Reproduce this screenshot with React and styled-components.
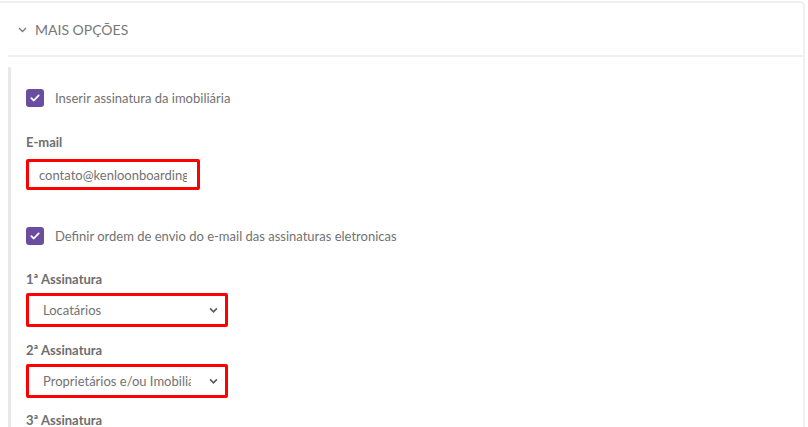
import React from 'react'
import styled, { createGlobalStyle } from 'styled-components'

const Global = createGlobalStyle`
  html, body { margin: 0; padding: 0; background: #fff; }
  body { font-family: Lato, "Open Sans", sans-serif; padding-top: 1px; }
`

function CheckMark() {
  return (
    <svg width="10" height="8" viewBox="0 0 10 8">
      <path d="M1.3 4.2 L3.8 6.5 L8.7 1.4" fill="none" stroke="#fff" strokeWidth="1.8" strokeLinecap="round" strokeLinejoin="round" />
    </svg>
  )
}

function App() {
  return (
    <>
      <Global />
      <Card>
        <Header>
          <svg width="9" height="6" viewBox="0 0 9 6">
            <path d="M1 1 L4.5 4.5 L8 1" fill="none" stroke="#777" strokeWidth="1.3" />
          </svg>
          <span>Mais opções</span>
        </Header>
        <Section>
          <CheckRow>
            <Check><CheckMark /></Check>
            <span>Inserir assinatura da imobiliária</span>
          </CheckRow>

          <Label $top={27}>E-mail</Label>
          <TextInput readOnly value="contato@kenloonboarding.com.br" />

          <CheckRow $top={37}>
            <Check><CheckMark /></Check>
            <span>Definir ordem de envio do e-mail das assinaturas eletronicas</span>
          </CheckRow>

          <Label $top={26}>1ª Assinatura</Label>
          <SelectWrap>
            <Select defaultValue="loc">
              <option value="loc">Locatários</option>
            </Select>
            <Chevron viewBox="0 0 10 7">
              <path d="M1.2 1.2 L5 5 L8.8 1.2" fill="none" stroke="#5a5a5a" strokeWidth="1.8" />
            </Chevron>
          </SelectWrap>

          <Label $top={15}>2ª Assinatura</Label>
          <SelectWrap>
            <Select defaultValue="prop">
              <option value="prop">Proprietários e/ou Imobiliária</option>
            </Select>
            <Chevron viewBox="0 0 10 7">
              <path d="M1.2 1.2 L5 5 L8.8 1.2" fill="none" stroke="#5a5a5a" strokeWidth="1.8" />
            </Chevron>
          </SelectWrap>

          <Label $top={14}>3ª Assinatura</Label>
        </Section>
      </Card>
    </>
  )
}

export default App

const Card = styled.div`
  width: 805px;
  height: 440px;
  box-sizing: border-box;
  border-top: 2px solid #efefef;
  border-right: 2px solid #efefef;
  border-top-right-radius: 5px;
  overflow: hidden;
`

const Header = styled.div`
  margin-left: 8px;
  height: 52px;
  display: flex;
  align-items: center;
  gap: 8px;
  padding-left: 10px;
  border-bottom: 2px solid #f0f0f0;
  color: #777;
  font-size: 14px;
  text-transform: uppercase;
  svg { margin-top: 1px; }
`

const Section = styled.div`
  margin: 10px 0 0 8px;
  border-left: 3px solid #e8e8e8;
  padding: 22px 0 0 15px;
  display: flex;
  flex-direction: column;
  align-items: flex-start;
  min-height: 400px;
`

const CheckRow = styled.label`
  display: flex;
  align-items: center;
  gap: 11px;
  margin-top: ${p => p.$top || 0}px;
  color: #727272;
  font-size: 13px;
`

const Check = styled.span`
  width: 18px;
  height: 18px;
  border-radius: 3px;
  background: #6b4d9f;
  display: flex;
  align-items: center;
  justify-content: center;
`

const Label = styled.div`
  margin-top: ${p => p.$top}px;
  color: #6e6e6e;
  font-size: 13px;
  font-weight: 700;
  line-height: 16px;
`

const TextInput = styled.input`
  margin-top: 9px;
  width: 174px;
  height: 31px;
  box-sizing: border-box;
  border: 3px solid #f00;
  border-radius: 2px;
  padding: 0 10px;
  font-family: Lato, sans-serif;
  font-size: 13px;
  color: #727272;
  outline: none;
`

const SelectWrap = styled.div`
  position: relative;
  margin-top: 6px;
  width: 202px;
`

const Select = styled.select`
  appearance: none;
  width: 202px;
  height: 34px;
  box-sizing: border-box;
  border: 3px solid #f00;
  border-radius: 2px;
  padding: 0 34px 0 14px;
  font-family: Lato, sans-serif;
  font-size: 13px;
  color: #727272;
  background: #fff;
  outline: none;
`

const Chevron = styled.svg`
  position: absolute;
  right: 10px;
  top: 14px;
  width: 9px;
  height: 7px;
  pointer-events: none;
`
